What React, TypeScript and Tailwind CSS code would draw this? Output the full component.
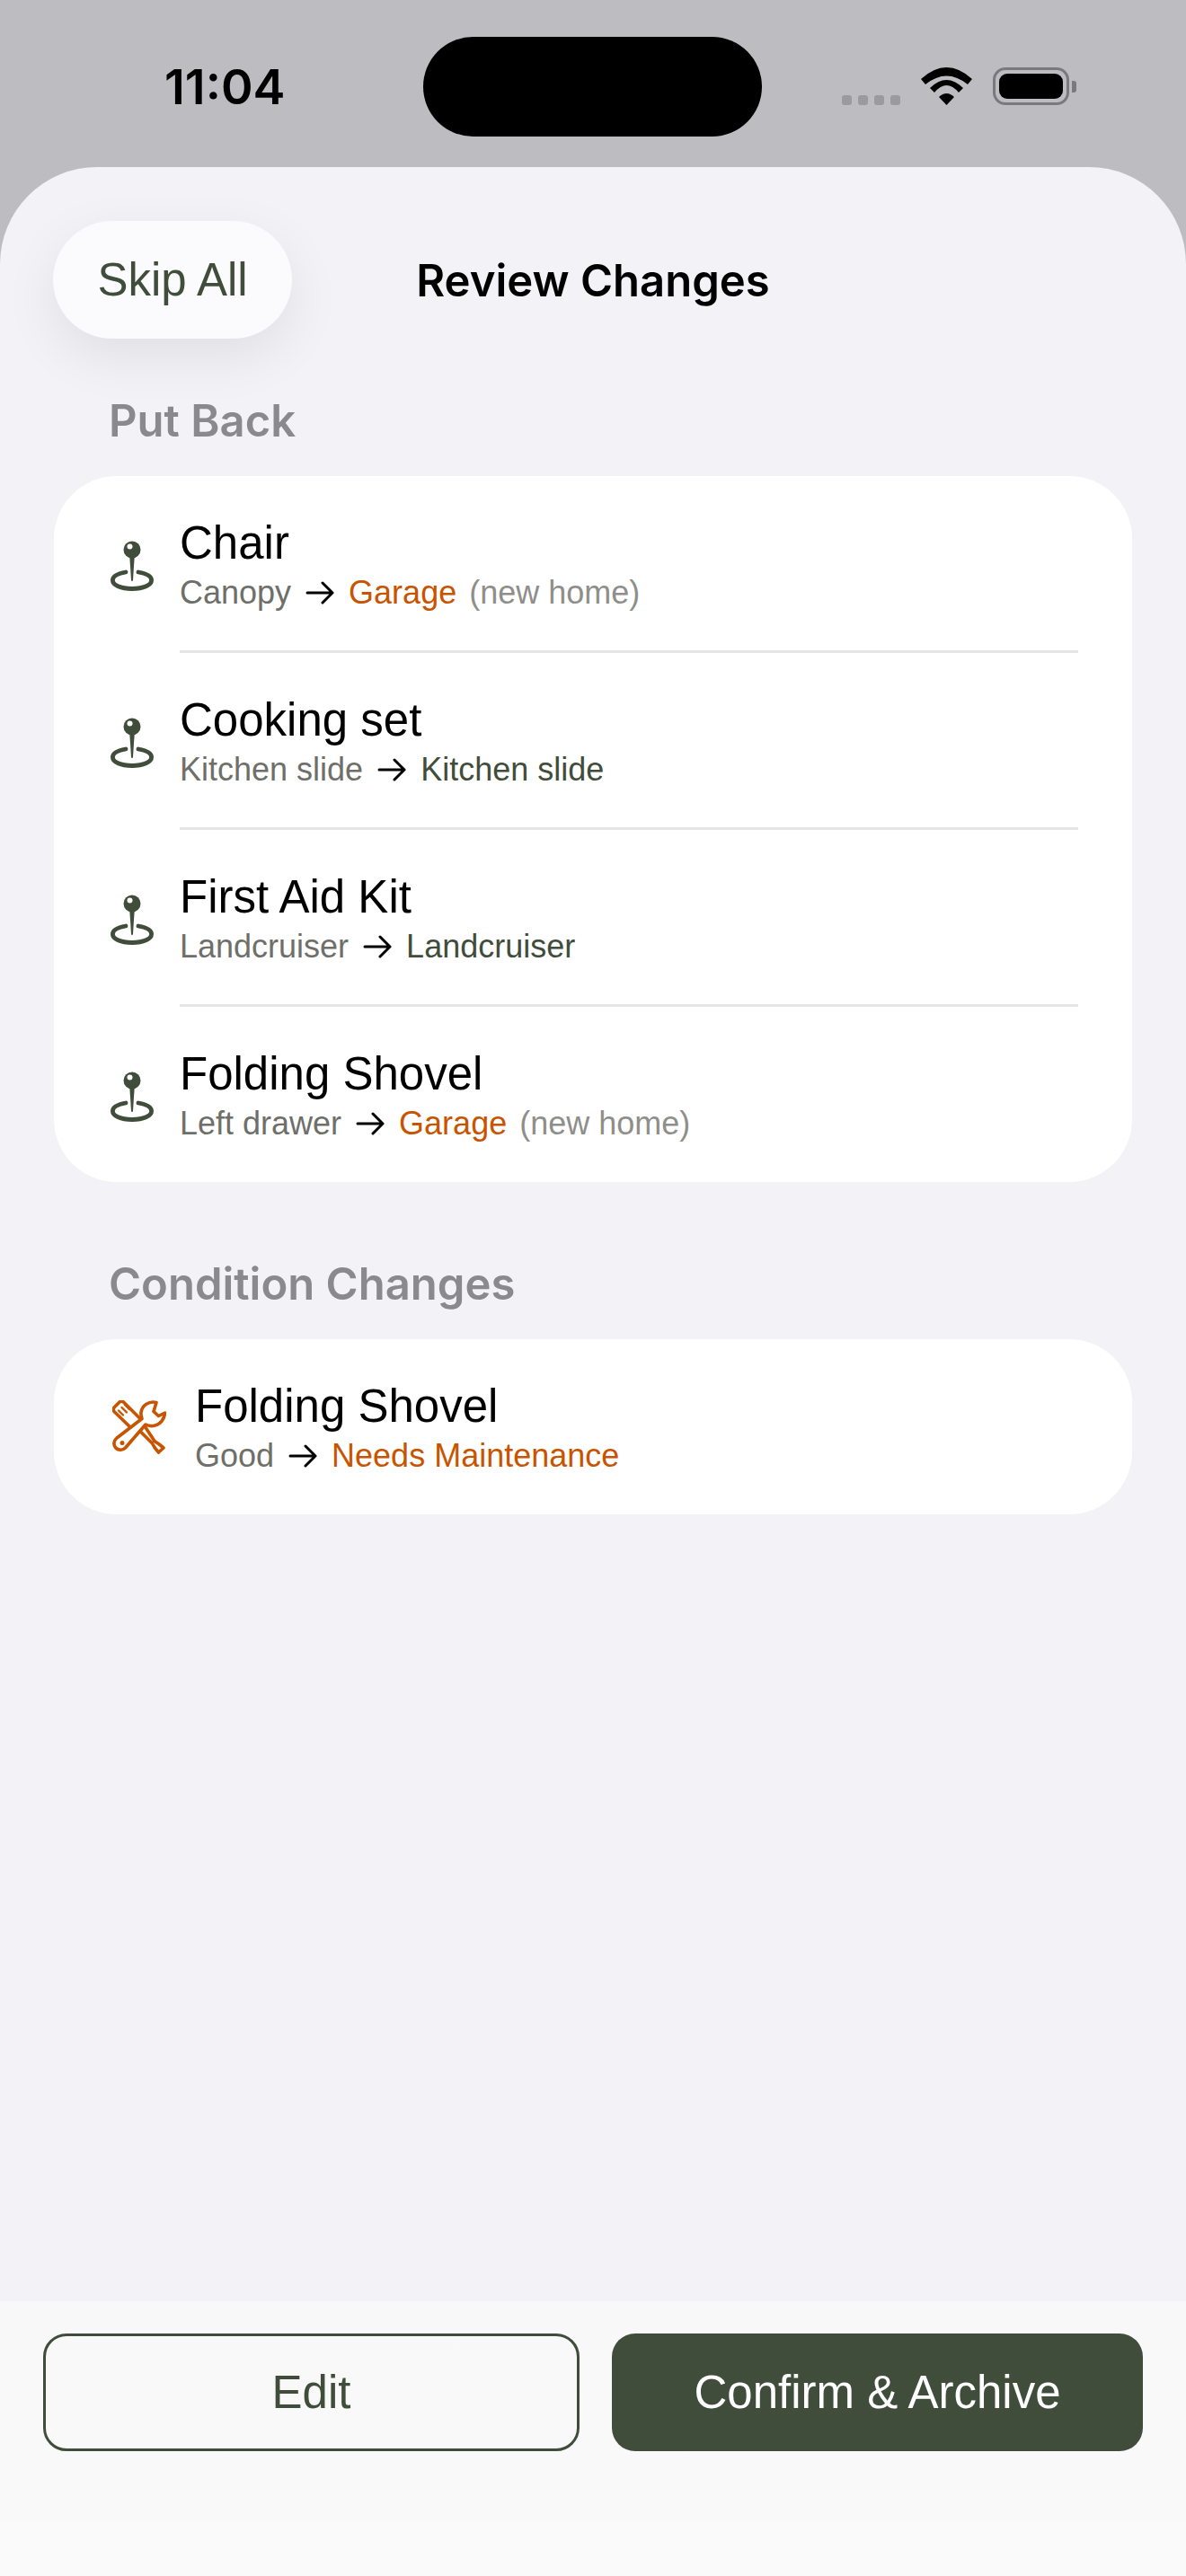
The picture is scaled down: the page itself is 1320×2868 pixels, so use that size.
import { Fragment } from 'react'

type Move = {
  name: string
  from: string
  to: string
  isNew?: boolean
}

const moves: Move[] = [
  { name: 'Chair', from: 'Canopy', to: 'Garage', isNew: true },
  { name: 'Cooking set', from: 'Kitchen slide', to: 'Kitchen slide' },
  { name: 'First Aid Kit', from: 'Landcruiser', to: 'Landcruiser' },
  { name: 'Folding Shovel', from: 'Left drawer', to: 'Garage', isNew: true },
]

function PinIcon() {
  return (
    <svg width="48" height="56" viewBox="0 0 48 56" fill="none" className="mt-[6px] ml-[3px] shrink-0">
      <path d="M17 35C8 36.500 2.400 39.500 2.400 44C2.400 49.500 11.500 53.500 24 53.500C36.500 53.500 45.600 49.500 45.600 44C45.600 39.500 40 36.500 31 35" stroke="#3f4d3a" strokeWidth="4.800" strokeLinecap="round" />
      <path d="M21.200 16L23 44C23.100 45.200 24.900 45.200 25 44L26.800 16Z" fill="#3f4d3a" />
      <circle cx="24" cy="10" r="9.500" fill="#3f4d3a" />
      <circle cx="21.500" cy="6.500" r="3" fill="#ffffff" />
    </svg>
  )
}

function ToolsIcon() {
  return (
    <svg width="60" height="60" viewBox="0 0 60 60" fill="none" stroke="#c85400" strokeWidth="3.600" strokeLinejoin="round" strokeLinecap="round" className="shrink-0">
      <path d="M20 30L2.500 13C0.500 11 0.500 9.500 2.500 7.500L7.500 2.500C9.500 0.500 11 0.500 13 2.500L30.500 20" />
      <path d="M7 11.500L12 16.500M10.500 8L16 13.500M14 5L19 10" strokeWidth="2.400" />
      <path d="M31 34.500L44.500 48L47 52.500L51.500 58L57 53L51.500 48.500L47 45.500L36.500 29.500" />
      <path d="M49 2.500C41 0.500 33 5.500 32 13.500C31.700 16.500 32 18 33 20.500L5 42C1.500 45 1 49.500 3.500 52.500C6.500 56 11.500 56 14.500 53L37 27C40 28.500 44 29 47.500 28C53.500 26.500 58 21 58.500 14L51.500 17.500L46 12.500Z" />
      <circle cx="11" cy="47.500" r="2.500" fill="#c85400" stroke="none" />
    </svg>
  )
}

function Arrow() {
  return (
    <svg width="32" height="26" viewBox="0 0 32 26" fill="none" stroke="#000000" strokeWidth="3" strokeLinecap="round" strokeLinejoin="round" className="mx-[16px] shrink-0">
      <path d="M2 13H30M19 2L30 13L19 24" />
    </svg>
  )
}

function StatusBar() {
  return (
    <div className="flex h-[186px] shrink-0 items-start bg-[#bdbcc1] pt-[41px]">
      <div className="flex w-[471px] justify-start pl-[183px] pt-[26px] font-['Inter'] text-[54px] leading-[60px] font-semibold text-black">11:04</div>
      <div className="h-[111px] w-[377px] rounded-full bg-black" />
      <div className="mt-[34px] ml-[89px] flex h-[42px] items-end gap-[23px]">
        <div className="flex gap-[7px]">
          <span className="h-[11px] w-[11px] rounded-[3px] bg-[#9b9b9d]" />
          <span className="h-[11px] w-[11px] rounded-[3px] bg-[#9b9b9d]" />
          <span className="h-[11px] w-[11px] rounded-[3px] bg-[#9b9b9d]" />
          <span className="h-[11px] w-[11px] rounded-[3px] bg-[#9b9b9d]" />
        </div>
        <svg width="57" height="42" viewBox="0 0 57 42" fill="#000000">
          <path d="M0 13Q28.500 -13 57 13L52 19Q28.500 0 5 19Z" />
          <path d="M10 23Q28.500 5 47 23L42 28Q28.500 12 15 28Z" />
          <path d="M20 33Q28.500 25 37 33L28.500 42Z" />
        </svg>
        <div className="flex items-center gap-[3px]">
          <div className="h-[42px] w-[85px] rounded-[14px] border-[3px] border-[#7a7a7d] p-[4px]">
            <div className="h-full w-full rounded-[9px] bg-black" />
          </div>
          <div className="h-[13px] w-[5px] rounded-r-[3px] bg-[#7a7a7d]" />
        </div>
      </div>
    </div>
  )
}

function MoveRow({ move }: { move: Move }) {
  return (
    <div className="flex h-[194px] items-center gap-[29px]">
      <PinIcon />
      <div className="min-w-0 pt-[4px]">
        <div className="text-[51px] leading-[58px] text-black">{move.name}</div>
        <div className="mt-[4px] flex items-center text-[36px] leading-[44px]">
          <span className="text-[#6f6f6a]">{move.from}</span>
          <Arrow />
          <span className={move.isNew ? 'text-[#c85400]' : 'text-[#3f4d3a]'}>{move.to}</span>
          {move.isNew && <span className="ml-[14px] text-[#8e8e8a]">(new home)</span>}
        </div>
      </div>
    </div>
  )
}

export default function App() {
  return (
    <div className="flex h-[2868px] w-[1320px] flex-col overflow-hidden bg-[#bdbcc1] font-['Liberation_Sans','Arial',sans-serif]">
      <StatusBar />
      <div className="flex flex-1 flex-col rounded-t-[108px] bg-[#f2f2f7]">
        <div className="grid grid-cols-[1fr_auto_1fr] items-center px-[59px] pt-[60px]">
          <button className="h-[131px] w-[266px] rounded-full bg-[#fbfbfd] pt-[2px] text-[51px] text-[#3f4d3a] shadow-[0_20px_60px_rgba(0,0,0,0.08)]">Skip All</button>
          <h1 className="pt-[2px] font-['Inter'] text-[49px] font-semibold text-black">Review Changes</h1>
          <div />
        </div>

        <h2 className="mt-[59px] pl-[121px] font-['Inter'] text-[49px] leading-[66px] font-semibold text-[#8a8a8e]">Put Back</h2>
        <div className="mx-[60px] mt-[28px] rounded-[70px] bg-white px-[60px] pb-[1px]">
          {moves.map((move, i) => (
            <Fragment key={move.name}>
              {i > 0 && <div className="ml-[80px] h-[3px] bg-[#e5e5e5]" />}
              <MoveRow move={move} />
            </Fragment>
          ))}
        </div>

        <h2 className="mt-[81px] pl-[121px] font-['Inter'] text-[49px] leading-[66px] font-semibold text-[#8a8a8e]">Condition Changes</h2>
        <div className="mx-[60px] mt-[28px] flex h-[195px] items-center gap-[32px] rounded-[70px] bg-white px-[65px]">
          <ToolsIcon />
          <div className="pt-[2px]">
            <div className="text-[51px] leading-[58px] text-black">Folding Shovel</div>
            <div className="mt-[4px] flex items-center text-[36px] leading-[44px]">
              <span className="text-[#6f6f6a]">Good</span>
              <Arrow />
              <span className="text-[#c85400]">Needs Maintenance</span>
            </div>
          </div>
        </div>

        <div className="mt-auto flex h-[306px] gap-[36px] bg-gradient-to-b from-[#f8f8f8] to-[#fafafa] px-[48px] pt-[36px]">
          <button className="h-[131px] flex-1 rounded-[26px] border-[3px] border-[#3f4d3a] pt-[2px] text-[51px] text-[#3f4d3a]">Edit</button>
          <button className="h-[131px] flex-1 rounded-[26px] bg-[#3f4d3a] pt-[2px] text-[51px] text-white">Confirm &amp; Archive</button>
        </div>
      </div>
    </div>
  )
}
